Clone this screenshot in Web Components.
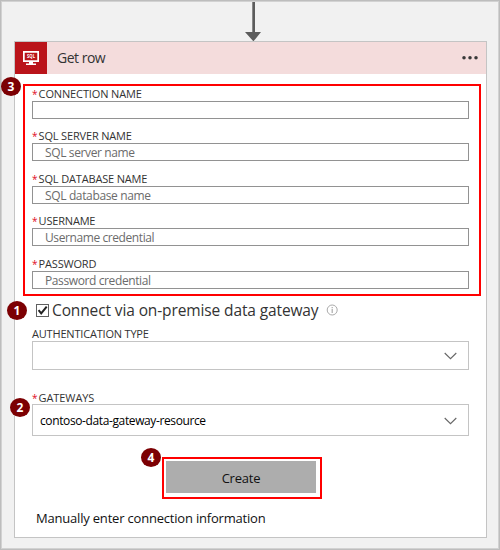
<!DOCTYPE html>
<html lang="en">
<head>
<meta charset="utf-8">
<title>Get row</title>
<style>
html,body{margin:0;height:100%}
body{font-family:"Open Sans","Noto Sans",sans-serif;color:#222}
</style>
</head>
<body>
<designer-canvas>
  <flow-arrow></flow-arrow>
  <action-card>
    <card-header>Get row</card-header>
    <connection-fields>
      <step-badge n="3" style="left:-24px;top:-9px"></step-badge>
      <text-field label="CONNECTION NAME" lw="102"></text-field>
      <text-field label="SQL SERVER NAME" lw="92" hint="SQL server name" hw="88.5" style="margin-top:10px"></text-field>
      <text-field label="SQL DATABASE NAME" lw="107.5" hint="SQL database name" hw="104.5" style="margin-top:11px"></text-field>
      <text-field label="USERNAME" lw="55.5" hint="Username credential" hw="108" style="margin-top:10px"></text-field>
      <text-field label="PASSWORD" lw="56.5" hint="Password credential" hw="104.5" style="margin-top:11px"></text-field>
    </connection-fields>
    <gateway-check>Connect via on-premise data gateway</gateway-check>
    <select-field label="AUTHENTICATION TYPE" lw="115.5" style="--h:29px;margin-top:4px"></select-field>
    <select-field required label="GATEWAYS" lw="54.5" value="contoso-data-gateway-resource" vw="164.5" style="--h:32px;--lh:13px;margin-top:21px">
      <step-badge n="2" style="left:-23px;top:-7px"></step-badge>
    </select-field>
    <create-button>Create</create-button>
    <manual-link>Manually enter connection information</manual-link>
  </action-card>
</designer-canvas>
<script>
const define = (name, html) => {
  const t = document.createElement('template');
  customElements.define(name, class extends HTMLElement {
    connectedCallback() {
      if (this.shadowRoot) return;
      t.innerHTML = typeof html === 'function' ? html(this) : html;
      this.attachShadow({mode: 'open'}).append(t.content.cloneNode(true));
    }
  });
};

// One line of text, tracked so that it spans the width given in "w".
customElements.define('fit-text', class extends HTMLElement {
  connectedCallback() {
    if (this.shadowRoot) return;
    this.attachShadow({mode: 'open'}).innerHTML =
      '<style>:host{display:inline-block;white-space:pre}</style><span><slot></slot></span>';
    const s = this.shadowRoot.querySelector('span');
    const n = this.textContent.length;
    const w = s.getBoundingClientRect().width;
    s.style.letterSpacing = ((+this.getAttribute('w') + 1.2 - w) / n).toFixed(3) + 'px';
  }
});

define('step-badge', el => `<style>
:host{position:absolute;width:20px;height:19px;border-radius:50%;background:#7c0003;color:#fff;
font:bold 12px/19px "Open Sans",sans-serif;text-align:center;z-index:2}
</style>${el.getAttribute('n')}`);

define('flow-arrow', `<style>:host{display:block;height:39px;padding-left:243px}svg{display:block}</style>
<svg width="16" height="39"><path d="M7.3 0H10V30H16L8.7 39H8.1L0 30H7.3Z" fill="#5c5c5c"/></svg>`);

define('card-header', `<style>
:host{display:flex;height:32px;background:#f4dcdc;align-items:center}
.logo{width:32px;height:32px;background:#ba141a}
.title{flex:1;padding-left:10px;font-size:14px;line-height:34px;color:#333}
svg{display:block}
.dots{margin-right:7px}
</style>
<svg class="logo" viewBox="0 0 32 32">
<path d="M8 9H24V20H18V21.5H21V23H11V21.5H14V20H8ZM9.7 10.7V18.3H22.3V10.7Z" fill="#fff" fill-rule="evenodd"/>
<text x="12" y="16.2" textLength="8" lengthAdjust="spacingAndGlyphs" font-family="Open Sans" font-weight="bold" font-size="4.6" fill="#fff">SQL</text>
</svg>
<div class="title"><fit-text w="47">Get row</fit-text></div>
<svg class="dots" width="18" height="6"><g fill="#383838"><circle cx="3" cy="2.8" r="1.75"/><circle cx="9" cy="2.8" r="1.75"/><circle cx="15" cy="2.8" r="1.75"/></g></svg>`);

define('connection-fields', `<style>
:host{display:block;position:relative;box-sizing:border-box;margin:10px 5px 1px 8px;height:212px;border:2px solid #f00;padding:1px 10px 0 7px}
</style><slot></slot>`);

const label = el => `<div class="label">${el.localName === 'text-field' || el.hasAttribute('required') ? '<i>*</i>' : ''}<fit-text w="${el.getAttribute('lw')}">${el.getAttribute('label')}</fit-text></div>`;
const labelCss = `.label{display:flex;height:var(--lh,14px);line-height:14px;font-size:11px;color:#333}
i{font-style:normal;font-size:10px;color:#e00b1c;width:6.6px;flex:none}`;

define('text-field', el => `<style>:host{display:block}${labelCss}
.box{box-sizing:border-box;height:18px;border:1px solid #929292;background:#fff;padding-left:12px;font-size:12px;line-height:17px;color:#6b6b6b}
</style>${label(el)}<div class="box">${el.hasAttribute('hint') ? `<fit-text w="${el.getAttribute('hw')}">${el.getAttribute('hint')}</fit-text>` : ''}</div>`);

define('gateway-check', `<style>
:host{display:flex;position:relative;align-items:center;height:26px;padding-left:21px;font-size:15.5px;color:#333}
svg{display:block;flex:none}
.info{margin-left:7px}
fit-text{margin-left:3px;line-height:26px}
</style>
<step-badge n="1" style="left:-8px;top:4px"></step-badge>
<svg width="13" height="13"><rect x=".5" y=".5" width="12" height="12" fill="#fff" stroke="#606060"/><path d="M2.6 6.2L5.2 9.4L10.7 2.7" fill="none" stroke="#222" stroke-width="2"/></svg>
<fit-text w="265.3">Connect via on-premise data gateway</fit-text>
<svg class="info" width="12" height="12"><circle cx="6.2" cy="6" r="5" fill="none" stroke="#aaa"/><path d="M6.2 5V9M6.2 3V4.2" stroke="#aaa" stroke-width="1.2"/></svg>`);

define('select-field', el => `<style>:host{display:block;margin-left:17px;margin-right:17px}${labelCss}
.box{position:relative;display:flex;align-items:center;justify-content:space-between;box-sizing:border-box;height:var(--h);border:1px solid #c4c4c4;background:#fff;padding:0 11px 0 7px;font-size:12px;color:#000}
svg{display:block;margin-left:auto;margin-top:1px}
</style>${label(el)}<div class="box"><slot></slot>${el.hasAttribute('value') ? `<fit-text w="${el.getAttribute('vw')}">${el.getAttribute('value')}</fit-text>` : ''}
<svg width="13" height="8"><path d="M.7 1L6.5 6.7L12.3 1" fill="none" stroke="#666" stroke-width="1.1"/></svg></div>`);

define('create-button', `<style>
:host{display:block;position:relative;box-sizing:border-box;width:160px;height:42px;margin:21px 0 0 147px;border:2px solid #f00;padding:2px}
button{display:block;width:150px;height:32px;border:0;padding:0;background:#adadad;color:#111;font:13px/34px "Open Sans",sans-serif}
</style><step-badge n="4" style="left:-23px;top:-11px"></step-badge><button><fit-text w="37.5">Create</fit-text></button>`);

define('manual-link', `<style>:host{display:block;padding:9px 0 0 21px;font-size:13px;line-height:20px;color:#111}</style>
<fit-text w="228.3">Manually enter connection information</fit-text>`);

define('action-card', `<style>
:host{display:block;box-sizing:border-box;width:473px;height:497px;margin-left:12px;background:#fff;border:1px solid #c4c4c4}
</style><slot></slot>`);

define('designer-canvas', `<style>
:host{display:block;box-sizing:border-box;width:500px;height:550px;background:#f1f1f1;border:1px solid #bdbdbd;box-shadow:inset 0 0 0 1px #d2d2d2;padding:1px}
</style><slot></slot>`);
</script>
</body>
</html>
